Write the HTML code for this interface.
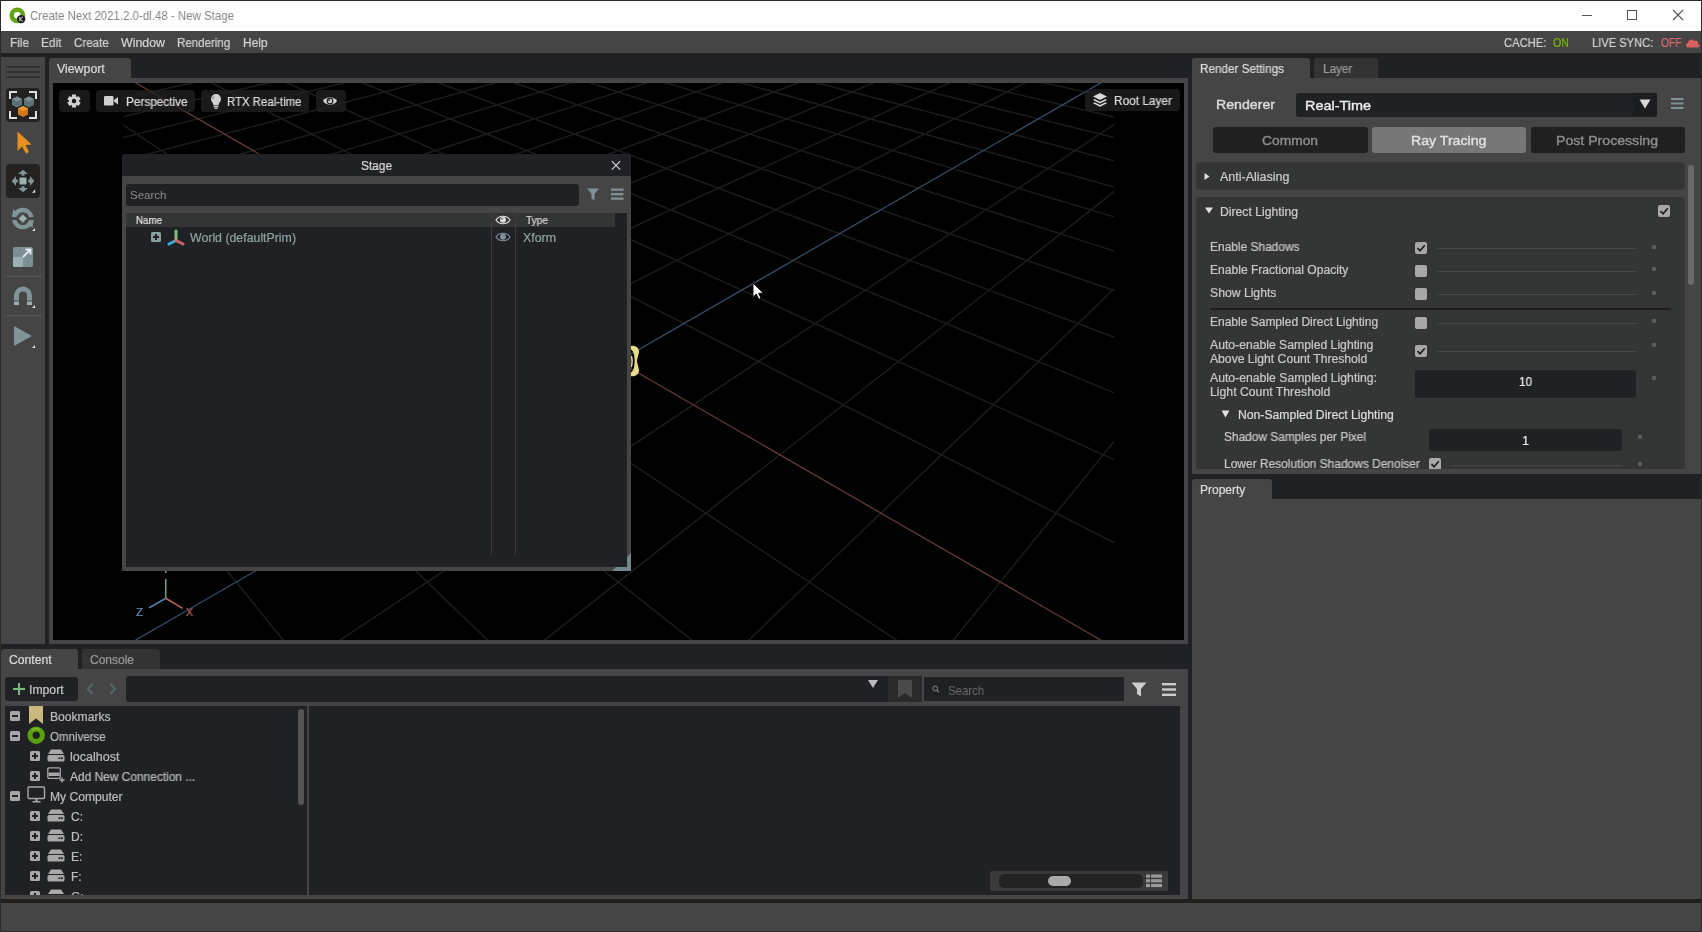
<!DOCTYPE html>
<html><head><meta charset="utf-8">
<style>
*{margin:0;padding:0;box-sizing:border-box}
html,body{width:1702px;height:932px;overflow:hidden;background:#1f2124}
body{position:relative;font-family:"Liberation Sans",sans-serif;font-size:12px;color:#d0d0d0}
.a{position:absolute}
.t{position:absolute;white-space:nowrap;line-height:1;transform-origin:0 0;will-change:transform}
</style></head><body>
<div class="a" style="left:0px;top:0px;width:1702px;height:932px;background:#2b2b2b;"></div>
<div class="a" style="left:1px;top:1px;width:1700px;height:30px;background:#ffffff;"></div>
<div class="a" style="left:1px;top:31px;width:1700px;height:22px;background:#454545;"></div>
<div class="a" style="left:1px;top:53px;width:1700px;height:4px;background:#231f1c;"></div>
<div class="a" style="left:1px;top:57px;width:1700px;height:842px;background:#1f2124;"></div>
<div class="a" style="left:1px;top:899px;width:1700px;height:4px;background:#231f1c;"></div>
<div class="a" style="left:1px;top:903px;width:1700px;height:28px;background:#454545;"></div>
<svg class="a" style="left:9px;top:7px;" width="17" height="17" viewBox="0 0 17 17"><circle cx="8.3" cy="8.3" r="5.6" fill="none" stroke="#5fa812" stroke-width="4.6"/><circle cx="12.2" cy="12.1" r="4.2" fill="#1a1a1a"/><path d="M10.9 9.9 V14.3 M13.9 9.9 L11.2 12.1 L13.9 14.3" stroke="#dddddd" stroke-width="1" fill="none"/></svg>
<div id="t0" class="t" style="left:30.0px;top:10.42px;font-size:12.50px;color:#858585;font-weight:normal;transform:scaleX(0.9174);">Create Next 2021.2.0-dl.48 - New Stage</div>
<div class="a" style="left:1582px;top:15px;width:10px;height:1px;background:#555;"></div>
<div class="a" style="left:1627px;top:10px;width:10px;height:10px;background:transparent;border:1px solid #555"></div>
<svg class="a" style="left:1672px;top:9px;" width="12" height="12" viewBox="0 0 12 12"><path d="M1 1L11 11M11 1L1 11" stroke="#555" stroke-width="1.1"/></svg>
<div id="t1" class="t" style="left:10.4px;top:36.84px;font-size:12.00px;color:#d2d2d2;font-weight:normal;-webkit-text-stroke:0.22px #d2d2d2;transform:scaleX(0.9822);">File</div>
<div id="t2" class="t" style="left:41.3px;top:36.84px;font-size:12.00px;color:#d2d2d2;font-weight:normal;-webkit-text-stroke:0.22px #d2d2d2;transform:scaleX(0.9861);">Edit</div>
<div id="t3" class="t" style="left:74.2px;top:36.84px;font-size:12.00px;color:#d2d2d2;font-weight:normal;-webkit-text-stroke:0.22px #d2d2d2;transform:scaleX(0.9658);">Create</div>
<div id="t4" class="t" style="left:121.0px;top:36.84px;font-size:12.00px;color:#d2d2d2;font-weight:normal;-webkit-text-stroke:0.22px #d2d2d2;transform:scaleX(1.0307);">Window</div>
<div id="t5" class="t" style="left:177.3px;top:36.84px;font-size:12.00px;color:#d2d2d2;font-weight:normal;-webkit-text-stroke:0.22px #d2d2d2;transform:scaleX(0.9607);">Rendering</div>
<div id="t6" class="t" style="left:243.0px;top:36.84px;font-size:12.00px;color:#d2d2d2;font-weight:normal;-webkit-text-stroke:0.22px #d2d2d2;transform:scaleX(0.9924);">Help</div>
<div id="t7" class="t" style="left:1504.2px;top:36.84px;font-size:12.00px;color:#d2d2d2;font-weight:normal;-webkit-text-stroke:0.22px #d2d2d2;transform:scaleX(0.9351);">CACHE:</div>
<div id="t8" class="t" style="left:1553.3px;top:36.84px;font-size:12.00px;color:#76b900;font-weight:normal;-webkit-text-stroke:0.22px #76b900;transform:scaleX(0.8833);">ON</div>
<div id="t9" class="t" style="left:1592.3px;top:36.84px;font-size:12.00px;color:#d2d2d2;font-weight:normal;-webkit-text-stroke:0.22px #d2d2d2;transform:scaleX(0.9299);">LIVE SYNC:</div>
<div id="t10" class="t" style="left:1660.5px;top:36.84px;font-size:12.00px;color:#e06a6a;font-weight:normal;-webkit-text-stroke:0.22px #e06a6a;transform:scaleX(0.8583);">OFF</div>
<svg class="a" style="left:1685px;top:37px;" width="15" height="11" viewBox="0 0 15 11"><path d="M3.5 10.5 C0.5 10.5 0 6.5 3 6 C3 2.5 7.5 1 9 4 C11 2.5 14 4.5 13 7 C15.5 8 15 10.5 12.5 10.5Z" fill="#d86060"/></svg>
<div class="a" style="left:1px;top:57px;width:44px;height:587px;background:#454545;"></div>
<div class="a" style="left:6px;top:66px;width:34px;height:2px;background:#333333;"></div>
<div class="a" style="left:6px;top:71px;width:34px;height:2px;background:#333333;"></div>
<div class="a" style="left:6px;top:76px;width:34px;height:2px;background:#333333;"></div>
<div class="a" style="left:6px;top:88px;width:34px;height:34px;background:#232221;border-radius:4px;"></div>
<svg class="a" style="left:6px;top:88px;" width="34" height="34" viewBox="0 0 34 34">
<path d="M4 11V4H11 M23 4H30V11 M4 23V30H11 M30 23V30H23" fill="none" stroke="#dedede" stroke-width="2"/>
<path d="M6 11 L11 8.5 L16 11 L16 17 L11 19.5 L6 17Z" fill="#5d7075"/><path d="M6 11 L11 13.5 L16 11 L11 8.5Z" fill="#7a8d92"/>
<path d="M18 11 L23 8.5 L28 11 L28 17 L23 19.5 L18 17Z" fill="#5d7075"/><path d="M18 11 L23 13.5 L28 11 L23 8.5Z" fill="#7a8d92"/>
<path d="M12 20.5 L17 18 L22 20.5 L22 26.5 L17 29 L12 26.5Z" fill="#d27a18"/><path d="M12 20.5 L17 23 L22 20.5 L17 18Z" fill="#f09a30"/>
</svg>
<svg class="a" style="left:15px;top:130px;" width="18" height="25" viewBox="0 0 18 25"><path d="M2.5 1.5 L2.5 21 L7 16.5 L11 23.5 L14 22 L10.5 15 L16.5 14.5Z" fill="#e8901e"/></svg>
<div class="a" style="left:6px;top:164px;width:34px;height:34px;background:#232221;border-radius:4px;"></div>
<svg class="a" style="left:6px;top:164px;" width="34" height="34" viewBox="0 0 34 34">
<path d="M17 5.7 L22 10 H18.5 V11.8 H15.5 V10 H12Z M17 28.3 L22 24 H18.5 V22.2 H15.5 V24 H12Z M5.7 17 L10 12 V15.5 H11.8 V18.5 H10 V22Z M28.3 17 L24 12 V15.5 H22.2 V18.5 H24 V22Z" fill="#7f9598"/>
<rect x="13.5" y="13.4" width="7" height="7.2" rx="1.2" fill="#9cb0b3"/>
<path d="M26 28.8 L29.2 25.6 L29.2 28.8Z" fill="#e8e8e8"/></svg>
<svg class="a" style="left:6px;top:204px;" width="34" height="34" viewBox="0 0 34 34">
<circle cx="16.8" cy="14.6" r="8.6" fill="none" stroke="#7f9598" stroke-width="4.3"/>
<rect x="3" y="13.1" width="28" height="3" fill="#454545"/>
<path d="M6.1 13.1 L7.1 5.2 L13.2 10.2Z" fill="#7f9598"/>
<path d="M27.5 16.1 L26.5 24 L20.4 19Z" fill="#7f9598"/>
<path d="M16.8 10.4 L21 14.6 L16.8 18.8 L12.6 14.6Z" fill="#9cb0b3"/>
<path d="M26 27 L29 24 L29 27Z" fill="#e0e0e0"/></svg>
<svg class="a" style="left:6px;top:244px;" width="34" height="28" viewBox="0 0 34 28">
<rect x="7" y="3" width="20" height="20" rx="2" fill="#7c8f93"/>
<rect x="7" y="13" width="10" height="10" rx="1.5" fill="#9cb0b3"/>
<path d="M17 13 L24.5 5.5 M19.5 5.5 H24.5 V10.5" fill="none" stroke="#e6eeee" stroke-width="1.8"/></svg>
<div class="a" style="left:4px;top:276px;width:38px;height:1px;background:#555555;"></div>
<svg class="a" style="left:6px;top:283px;" width="34" height="28" viewBox="0 0 34 28">
<path d="M8 17.5 V12.5 A9 9 0 0 1 26 12.5 V17.5 H21 V12.5 A4 4 0 0 0 13 12.5 V17.5Z" fill="#7f9598"/>
<rect x="8" y="18.5" width="5" height="3.5" fill="#9cb0b3"/><rect x="21" y="18.5" width="5" height="3.5" fill="#9cb0b3"/>
<path d="M26 25 L29 22 L29 25Z" fill="#e0e0e0"/></svg>
<div class="a" style="left:4px;top:315px;width:38px;height:1px;background:#555555;"></div>
<svg class="a" style="left:6px;top:322px;" width="34" height="28" viewBox="0 0 34 28">
<path d="M8 4 L26 14 L8 24Z" fill="#7f9598"/>
<path d="M26 26 L29 23 L29 26Z" fill="#e0e0e0"/></svg>
<div class="a" style="left:45px;top:57px;width:4px;height:842px;background:#1f2124;"></div>
<div class="a" style="left:49px;top:58px;width:82px;height:20px;background:#454545;border-radius:3px 3px 0 0;"></div>
<div id="t11" class="t" style="left:57.1px;top:63.14px;font-size:12.00px;color:#d8d8d8;font-weight:normal;-webkit-text-stroke:0.22px #d8d8d8;transform:scaleX(1.0283);">Viewport</div>
<div class="a" style="left:49px;top:78px;width:1139px;height:566px;background:#454545;"></div>
<div class="a" style="left:53px;top:83px;width:1131px;height:557px;background:#000000;"></div>
<svg width="991" height="557" style="position:absolute;left:123px;top:83px" shape-rendering="auto"><g stroke="#1c1c1c" stroke-width="1.5"><line x1="495.2" y1="-125.9" x2="1500.2" y2="67.5"/><line x1="495.2" y1="-125.9" x2="-509.7" y2="67.5"/><line x1="471.4" y1="-121.3" x2="1498.1" y2="85.5"/><line x1="519.1" y1="-121.3" x2="-507.6" y2="85.5"/><line x1="446.4" y1="-116.5" x2="1495.8" y2="105.2"/><line x1="544.1" y1="-116.5" x2="-505.3" y2="105.2"/><line x1="420.2" y1="-111.4" x2="1493.3" y2="126.9"/><line x1="570.3" y1="-111.4" x2="-502.8" y2="126.9"/><line x1="392.8" y1="-106.1" x2="1490.5" y2="150.8"/><line x1="597.7" y1="-106.1" x2="-500.0" y2="150.8"/><line x1="363.9" y1="-100.6" x2="1487.5" y2="177.4"/><line x1="626.6" y1="-100.6" x2="-497.0" y2="177.4"/><line x1="333.6" y1="-94.8" x2="1484.0" y2="207.1"/><line x1="656.9" y1="-94.8" x2="-493.5" y2="207.1"/><line x1="301.7" y1="-88.6" x2="1480.2" y2="240.6"/><line x1="688.8" y1="-88.6" x2="-489.7" y2="240.6"/><line x1="268.1" y1="-82.2" x2="1475.8" y2="278.5"/><line x1="722.4" y1="-82.2" x2="-485.3" y2="278.5"/><line x1="232.6" y1="-75.3" x2="1470.8" y2="321.8"/><line x1="757.9" y1="-75.3" x2="-480.3" y2="321.8"/><line x1="195.1" y1="-68.1" x2="1465.0" y2="371.8"/><line x1="795.4" y1="-68.1" x2="-474.5" y2="371.8"/><line x1="155.4" y1="-60.5" x2="1458.3" y2="430.1"/><line x1="835.1" y1="-60.5" x2="-467.8" y2="430.1"/><line x1="113.2" y1="-52.3" x2="1450.3" y2="499.1"/><line x1="877.3" y1="-52.3" x2="-459.8" y2="499.1"/><line x1="68.5" y1="-43.7" x2="1440.8" y2="581.8"/><line x1="922.0" y1="-43.7" x2="-450.3" y2="581.8"/><line x1="20.8" y1="-34.6" x2="1429.1" y2="682.9"/><line x1="969.7" y1="-34.6" x2="-438.6" y2="682.9"/><line x1="-84.4" y1="-14.3" x2="1395.8" y2="971.7"/><line x1="1074.9" y1="-14.3" x2="-405.3" y2="971.7"/><line x1="-142.6" y1="-3.1" x2="1370.7" y2="1188.3"/><line x1="1133.1" y1="-3.1" x2="-380.2" y2="1188.3"/><line x1="-205.1" y1="8.9" x2="1335.7" y2="1491.6"/><line x1="1195.6" y1="8.9" x2="-345.2" y2="1491.6"/><line x1="-272.5" y1="21.9" x2="1283.2" y2="1946.5"/><line x1="1263.0" y1="21.9" x2="-292.7" y2="1946.5"/><line x1="-345.2" y1="35.9" x2="1195.6" y2="2704.7"/><line x1="1335.7" y1="35.9" x2="-205.1" y2="2704.7"/><line x1="-424.0" y1="51.0" x2="1020.5" y2="4221.1"/><line x1="1414.5" y1="51.0" x2="-30.0" y2="4221.1"/><line x1="-509.7" y1="67.5" x2="495.2" y2="8770.3"/><line x1="1500.2" y1="67.5" x2="495.2" y2="8770.3"/></g><g stroke-width="1.2"><line x1="-30.0" y1="-24.8" x2="1414.5" y2="809.2" stroke="#6a3b36"/><line x1="1020.5" y1="-24.8" x2="-424.0" y2="809.2" stroke="#37516b"/></g></svg>
<svg class="a" style="left:626px;top:344px;" width="16" height="34" viewBox="0 0 16 34"><path d="M5 1.8 C9 1.5 12.5 3 13 7 C13.3 10 11.2 13 11 17 C11.2 21 13.3 24 13 27 C12.5 31 9 32.5 5 32.2 L5 28.5 C7 27.5 8.6 24 8.6 17 C8.6 10 7 6.5 5 5.5Z" fill="#e8dc84"/><path d="M5 12 C6.3 13.5 6.6 20.5 5 23" fill="none" stroke="#e8dc84" stroke-width="1.5"/></svg>
<div class="a" style="left:59px;top:90px;width:31px;height:22px;background:rgba(34,34,34,0.72);border-radius:4px;"></div>
<svg class="a" style="left:66px;top:93px;" width="16" height="16" viewBox="0 0 16 16"><path fill="#d0d0d0" fill-rule="evenodd" d="M5.50 3.67 L5.96 3.43 L5.99 1.50 L10.01 1.50 L10.04 3.43 L10.50 3.67 L10.93 3.95 L12.62 3.01 L14.63 6.49 L12.97 7.48 L13.00 8.00 L12.97 8.52 L14.63 9.51 L12.62 12.99 L10.93 12.05 L10.50 12.33 L10.04 12.57 L10.01 14.50 L5.99 14.50 L5.96 12.57 L5.50 12.33 L5.07 12.05 L3.38 12.99 L1.37 9.51 L3.03 8.52 L3.00 8.00 L3.03 7.48 L1.37 6.49 L3.38 3.01 L5.07 3.95Z M8 5.8 A2.2 2.2 0 1 0 8 10.2 A2.2 2.2 0 1 0 8 5.8Z"/></svg>
<div class="a" style="left:96px;top:90px;width:99px;height:22px;background:rgba(34,34,34,0.72);border-radius:4px;"></div>
<svg class="a" style="left:103px;top:95px;" width="17" height="12" viewBox="0 0 17 12"><rect x="1" y="1" width="9.5" height="9.5" rx="1.3" fill="#d0d0d0"/><path d="M11 5 L15 2 V9.5 L11 6.5Z" fill="#d0d0d0"/></svg>
<div id="t12" class="t" style="left:125.5px;top:95.84px;font-size:12.00px;color:#dcdcdc;font-weight:normal;-webkit-text-stroke:0.22px #dcdcdc;transform:scaleX(0.9824);">Perspective</div>
<div class="a" style="left:201px;top:90px;width:108px;height:22px;background:rgba(34,34,34,0.72);border-radius:4px;"></div>
<svg class="a" style="left:209px;top:93px;" width="14" height="17" viewBox="0 0 14 17"><path d="M7 1 A5 5 0 0 1 12 6 C12 8.5 10 9.5 9.6 12 H4.4 C4 9.5 2 8.5 2 6 A5 5 0 0 1 7 1Z" fill="#d0d0d0"/><path d="M5 3.5 A3 3 0 0 0 3.8 6" stroke="#555" stroke-width="1" fill="none"/><rect x="4.5" y="12.6" width="5" height="1.4" fill="#d0d0d0"/><rect x="5" y="14.4" width="4" height="1.4" rx="0.6" fill="#d0d0d0"/></svg>
<div id="t13" class="t" style="left:226.5px;top:95.84px;font-size:12.00px;color:#dcdcdc;font-weight:normal;-webkit-text-stroke:0.22px #dcdcdc;transform:scaleX(0.9494);">RTX Real-time</div>
<div class="a" style="left:316px;top:90px;width:30px;height:22px;background:rgba(34,34,34,0.72);border-radius:4px;"></div>
<svg class="a" style="left:322px;top:95px;" width="16" height="12" viewBox="0 0 16 12"><path d="M1 6 C4 1 12 1 15 6 C12 11 4 11 1 6Z" fill="#d0d0d0"/><circle cx="8" cy="6" r="3.4" fill="#222"/><circle cx="8" cy="6" r="2.2" fill="#d0d0d0"/><circle cx="7" cy="5" r="0.9" fill="#222"/></svg>
<div class="a" style="left:1085px;top:89px;width:95px;height:22px;background:rgba(34,34,34,0.72);border-radius:4px;"></div>
<svg class="a" style="left:1092px;top:92px;" width="16" height="16" viewBox="0 0 16 16"><path d="M8 1 L15 4.5 L8 8 L1 4.5Z" fill="#dadada"/><path d="M2.5 7 L8 9.8 L13.5 7 L15 7.9 L8 11.4 L1 7.9Z" fill="#dadada"/><path d="M2.5 10.3 L8 13.1 L13.5 10.3 L15 11.2 L8 14.7 L1 11.2Z" fill="#dadada"/></svg>
<div id="t14" class="t" style="left:1114.0px;top:94.84px;font-size:12.00px;color:#dcdcdc;font-weight:normal;-webkit-text-stroke:0.22px #dcdcdc;transform:scaleX(0.9880);">Root Layer</div>
<svg class="a" style="left:130px;top:560px;" width="70" height="62" viewBox="0 0 70 62"><path d="M35.8 19 V38.2" stroke="#6fa860" stroke-width="1.5"/><path d="M35.8 11 V13" stroke="#6fa860" stroke-width="1.5"/>
<path d="M35.8 38.2 L19 47.9" stroke="#4f86b8" stroke-width="1.6"/><path d="M35.8 38.2 L52.6 48.4" stroke="#c26458" stroke-width="1.6"/></svg>
<div id="t15" class="t" style="left:135.8px;top:606.97px;font-size:11.50px;color:#5b8fc2;font-weight:normal;-webkit-text-stroke:0.22px #5b8fc2;transform:scaleX(1.0098);">Z</div>
<div id="t16" class="t" style="left:186.0px;top:606.97px;font-size:11.50px;color:#c5645a;font-weight:normal;-webkit-text-stroke:0.22px #c5645a;transform:scaleX(0.9124);">X</div>
<svg class="a" style="left:751px;top:281px;" width="14" height="20" viewBox="0 0 14 20"><path d="M2 2 V16.2 L5.3 13 L7.8 18.2 L10 17.3 L7.6 12.2 H12.4Z" fill="#fff" stroke="#000" stroke-width="0.9"/></svg>
<div class="a" style="left:122px;top:154px;width:509px;height:417px;background:#454545;border-radius:3px 3px 0 0;"></div>
<div class="a" style="left:122px;top:154px;width:509px;height:22px;background:#1f2124;border-radius:3px 3px 0 0;"></div>
<div id="t17" class="t" style="left:360.7px;top:160.04px;font-size:12.00px;color:#dcdcdc;font-weight:normal;-webkit-text-stroke:0.22px #dcdcdc;transform:scaleX(0.9885);">Stage</div>
<svg class="a" style="left:610px;top:160px;" width="12" height="11" viewBox="0 0 12 11"><path d="M1.8 1.2 L10.2 9.6 M10.2 1.2 L1.8 9.6" stroke="#e0e0e0" stroke-width="1.05"/></svg>
<div class="a" style="left:126px;top:184px;width:453px;height:22px;background:#1f2124;border-radius:3px;"></div>
<div id="t18" class="t" style="left:130.3px;top:190.27px;font-size:11.50px;color:#8a8a8a;font-weight:normal;transform:scaleX(0.9880);">Search</div>
<svg class="a" style="left:585px;top:186px;" width="16" height="16" viewBox="0 0 16 16"><path d="M2 2.5 H14 L9.5 8 V14.5 L6.5 12.5 V8Z" fill="#7f9195"/></svg>
<svg class="a" style="left:609px;top:186px;" width="16" height="16" viewBox="0 0 16 16"><rect x="2" y="2.5" width="12.5" height="2.3" fill="#7f9195"/><rect x="2" y="7" width="12.5" height="2.3" fill="#7f9195"/><rect x="2" y="11.5" width="12.5" height="2.3" fill="#7f9195"/></svg>
<div class="a" style="left:126px;top:213px;width:501px;height:354px;background:#1f2124;"></div>
<div class="a" style="left:126px;top:213px;width:489px;height:14px;background:#343535;"></div>
<div id="t19" class="t" style="left:136.2px;top:214.91px;font-size:10.50px;color:#e0e0e0;font-weight:normal;-webkit-text-stroke:0.22px #e0e0e0;transform:scaleX(0.9281);">Name</div>
<div id="t20" class="t" style="left:525.5px;top:215.01px;font-size:10.50px;color:#d8d8d8;font-weight:normal;-webkit-text-stroke:0.22px #d8d8d8;transform:scaleX(0.9664);">Type</div>
<div class="a" style="left:491px;top:213px;width:1px;height:342px;background:#3c3c3c;"></div>
<div class="a" style="left:515px;top:213px;width:1px;height:342px;background:#3c3c3c;"></div>
<svg class="a" style="left:495px;top:214px;" width="16" height="12" viewBox="0 0 16 12"><path d="M1 6 C4 1 12 1 15 6 C12 11 4 11 1 6Z" fill="none" stroke="#e0e0e0" stroke-width="1.2"/><circle cx="8" cy="5.8" r="3" fill="#e0e0e0"/><circle cx="7" cy="4.8" r="1" fill="#777"/></svg>
<svg class="a" style="left:495px;top:231px;" width="16" height="12" viewBox="0 0 16 12"><path d="M1 6 C4 1 12 1 15 6 C12 11 4 11 1 6Z" fill="none" stroke="#7f9195" stroke-width="1.2"/><circle cx="8" cy="5.8" r="3" fill="#7f9195"/></svg>
<div class="a" style="left:151px;top:232px;width:10px;height:10px;background:#8b9ea2;border-radius:1.5px;"></div>
<div class="a" style="left:155px;top:234px;width:2px;height:6px;background:#1f2124;"></div>
<div class="a" style="left:153px;top:236px;width:6px;height:2px;background:#1f2124;"></div>
<svg class="a" style="left:166px;top:229px;" width="20" height="17" viewBox="0 0 20 17"><path d="M10 2 V11" stroke="#7cbf7e" stroke-width="3" stroke-linecap="round"/><path d="M10 11.5 L3 15" stroke="#30b0d4" stroke-width="3" stroke-linecap="round"/><path d="M10 11.5 L17 15" stroke="#d06464" stroke-width="3" stroke-linecap="round"/></svg>
<div id="t21" class="t" style="left:190.3px;top:231.84px;font-size:12.00px;color:#8fa1a3;font-weight:normal;-webkit-text-stroke:0.22px #8fa1a3;transform:scaleX(1.0277);">World (defaultPrim)</div>
<div id="t22" class="t" style="left:523.4px;top:231.84px;font-size:12.00px;color:#8fa1a3;font-weight:normal;-webkit-text-stroke:0.22px #8fa1a3;transform:scaleX(1.0307);">Xform</div>
<svg class="a" style="left:612px;top:553px;" width="19" height="18" viewBox="0 0 19 18"><path d="M19 0 V18 H0 L4 14 H15 V4Z" fill="#73868a"/></svg>
<div class="a" style="left:1188px;top:57px;width:4px;height:842px;background:#1f2124;"></div>
<div class="a" style="left:1192px;top:58px;width:118px;height:20px;background:#454545;border-radius:3px 3px 0 0;"></div>
<div id="t23" class="t" style="left:1200.3px;top:62.84px;font-size:12.00px;color:#dcdcdc;font-weight:normal;-webkit-text-stroke:0.22px #dcdcdc;transform:scaleX(0.9760);">Render Settings</div>
<div class="a" style="left:1314px;top:58px;width:64px;height:20px;background:#333333;border-radius:3px 3px 0 0;"></div>
<div id="t24" class="t" style="left:1322.6px;top:62.84px;font-size:12.00px;color:#9a9a9a;font-weight:normal;-webkit-text-stroke:0.22px #9a9a9a;transform:scaleX(0.9790);">Layer</div>
<div class="a" style="left:1192px;top:78px;width:509px;height:396px;background:#454545;"></div>
<div id="t25" class="t" style="left:1216.4px;top:97.74px;font-size:13.30px;color:#dedede;font-weight:normal;-webkit-text-stroke:0.4px #dedede;transform:scaleX(1.0643);">Renderer</div>
<div class="a" style="left:1296px;top:93px;width:361px;height:24px;background:#1f2124;border-radius:3px;"></div>
<div class="a" style="left:1633px;top:93px;width:24px;height:24px;background:#1b1c1e;border-radius:0 3px 3px 0;"></div>
<div id="t26" class="t" style="left:1304.5px;top:98.77px;font-size:13.50px;color:#eeeeee;font-weight:normal;-webkit-text-stroke:0.4px #eeeeee;transform:scaleX(1.0686);">Real-Time</div>
<svg class="a" style="left:1638px;top:98px;" width="14" height="12" viewBox="0 0 14 12"><path d="M1.5 1.5 H12.5 L7 10.5Z" fill="#d8d8d8"/></svg>
<svg class="a" style="left:1670px;top:97px;" width="14" height="13" viewBox="0 0 14 13"><rect x="1" y="1" width="12.5" height="2" fill="#7f9195"/><rect x="1" y="5.5" width="12.5" height="2" fill="#7f9195"/><rect x="1" y="10" width="12.5" height="2" fill="#7f9195"/></svg>
<div class="a" style="left:1213px;top:127px;width:155px;height:26px;background:#202020;border-radius:3px;"></div>
<div id="t27" class="t" style="left:1261.5px;top:133.60px;font-size:13.00px;color:#8c8c8c;font-weight:normal;-webkit-text-stroke:0.4px #8c8c8c;transform:scaleX(1.0616);">Common</div>
<div class="a" style="left:1372px;top:127px;width:154px;height:26px;background:#777777;border-radius:3px;"></div>
<div id="t28" class="t" style="left:1411.3px;top:133.60px;font-size:13.00px;color:#e0e0e0;font-weight:normal;-webkit-text-stroke:0.4px #e0e0e0;transform:scaleX(1.0868);">Ray Tracing</div>
<div class="a" style="left:1530.5px;top:127px;width:154.5px;height:26px;background:#202020;border-radius:3px;"></div>
<div id="t29" class="t" style="left:1556.4px;top:133.60px;font-size:13.00px;color:#8c8c8c;font-weight:normal;-webkit-text-stroke:0.4px #8c8c8c;transform:scaleX(1.0858);">Post Processing</div>
<div class="a" style="left:1196px;top:162px;width:489px;height:28px;background:#343535;border-radius:3px;"></div>
<svg class="a" style="left:1203px;top:172px;" width="8" height="9" viewBox="0 0 8 9"><path d="M1.5 1 L6.5 4.5 L1.5 8Z" fill="#e0e0e0"/></svg>
<div id="t30" class="t" style="left:1220.0px;top:171.14px;font-size:12.00px;color:#cccccc;font-weight:normal;-webkit-text-stroke:0.22px #cccccc;transform:scaleX(1.0419);">Anti-Aliasing</div>
<div class="a" style="left:1196px;top:197px;width:489px;height:272px;background:#343535;border-radius:3px 3px 0 0;"></div>
<svg class="a" style="left:1204px;top:206px;" width="10" height="9" viewBox="0 0 10 9"><path d="M1 1.5 H9 L5 7.5Z" fill="#e0e0e0"/></svg>
<div id="t31" class="t" style="left:1220.0px;top:206.14px;font-size:12.00px;color:#cccccc;font-weight:normal;-webkit-text-stroke:0.22px #cccccc;transform:scaleX(1.0167);">Direct Lighting</div>
<div class="a" style="left:1658px;top:205px;width:12px;height:12px;background:#a8a8a8;border-radius:2px;"></div><svg class="a" style="left:1658px;top:205px;" width="12" height="12" viewBox="0 0 12 12"><path d="M2.5 6.2 L5 8.8 L9.8 3.2" fill="none" stroke="#1e1e1e" stroke-width="1.7"/></svg>
<div id="t32" class="t" style="left:1210.3px;top:240.74px;font-size:12.00px;color:#c8c8c8;font-weight:normal;-webkit-text-stroke:0.22px #c8c8c8;transform:scaleX(0.9936);">Enable Shadows</div>
<div class="a" style="left:1415px;top:242px;width:12px;height:12px;background:#a8a8a8;border-radius:2px;"></div><svg class="a" style="left:1415px;top:242px;" width="12" height="12" viewBox="0 0 12 12"><path d="M2.5 6.2 L5 8.8 L9.8 3.2" fill="none" stroke="#1e1e1e" stroke-width="1.7"/></svg>
<div class="a" style="left:1437px;top:248px;width:199px;height:1px;background:#474848;"></div>
<div class="a" style="left:1652px;top:244.6px;width:4px;height:4px;background:#5c5d5d;border-radius:1px;"></div>
<div id="t33" class="t" style="left:1210.3px;top:263.84px;font-size:12.00px;color:#c8c8c8;font-weight:normal;-webkit-text-stroke:0.22px #c8c8c8;transform:scaleX(1.0065);">Enable Fractional Opacity</div>
<div class="a" style="left:1415px;top:265px;width:12px;height:12px;background:#a8a8a8;border-radius:2px;"></div>
<div class="a" style="left:1437px;top:271px;width:199px;height:1px;background:#474848;"></div>
<div class="a" style="left:1652px;top:267.4px;width:4px;height:4px;background:#5c5d5d;border-radius:1px;"></div>
<div id="t34" class="t" style="left:1210.3px;top:286.84px;font-size:12.00px;color:#c8c8c8;font-weight:normal;-webkit-text-stroke:0.22px #c8c8c8;transform:scaleX(1.0157);">Show Lights</div>
<div class="a" style="left:1415px;top:288px;width:12px;height:12px;background:#a8a8a8;border-radius:2px;"></div>
<div class="a" style="left:1437px;top:294px;width:199px;height:1px;background:#474848;"></div>
<div class="a" style="left:1652px;top:290.5px;width:4px;height:4px;background:#5c5d5d;border-radius:1px;"></div>
<div id="t35" class="t" style="left:1210.3px;top:315.84px;font-size:12.00px;color:#c8c8c8;font-weight:normal;-webkit-text-stroke:0.22px #c8c8c8;">Enable Sampled Direct Lighting</div>
<div class="a" style="left:1415px;top:317px;width:12px;height:12px;background:#a8a8a8;border-radius:2px;"></div>
<div class="a" style="left:1437px;top:323px;width:199px;height:1px;background:#474848;"></div>
<div class="a" style="left:1652px;top:319.4px;width:4px;height:4px;background:#5c5d5d;border-radius:1px;"></div>
<div class="a" style="left:1210px;top:308px;width:461px;height:2px;background:#1e1e1e;"></div>
<div id="t36" class="t" style="left:1210.3px;top:339.24px;font-size:12.00px;color:#c8c8c8;font-weight:normal;-webkit-text-stroke:0.22px #c8c8c8;transform:scaleX(1.0157);">Auto-enable Sampled Lighting</div>
<div id="t37" class="t" style="left:1210.3px;top:353.14px;font-size:12.00px;color:#c8c8c8;font-weight:normal;-webkit-text-stroke:0.22px #c8c8c8;transform:scaleX(1.0134);">Above Light Count Threshold</div>
<div class="a" style="left:1415px;top:345px;width:12px;height:12px;background:#a8a8a8;border-radius:2px;"></div><svg class="a" style="left:1415px;top:345px;" width="12" height="12" viewBox="0 0 12 12"><path d="M2.5 6.2 L5 8.8 L9.8 3.2" fill="none" stroke="#1e1e1e" stroke-width="1.7"/></svg>
<div class="a" style="left:1437px;top:351px;width:199px;height:1px;background:#474848;"></div>
<div class="a" style="left:1652px;top:342.5px;width:4px;height:4px;background:#5c5d5d;border-radius:1px;"></div>
<div id="t38" class="t" style="left:1210.3px;top:371.84px;font-size:12.00px;color:#c8c8c8;font-weight:normal;-webkit-text-stroke:0.22px #c8c8c8;transform:scaleX(1.0175);">Auto-enable Sampled Lighting:</div>
<div id="t39" class="t" style="left:1210.3px;top:386.24px;font-size:12.00px;color:#c8c8c8;font-weight:normal;-webkit-text-stroke:0.22px #c8c8c8;transform:scaleX(1.0207);">Light Count Threshold</div>
<div class="a" style="left:1415px;top:370px;width:221px;height:28px;background:#1f2124;border-radius:2px;"></div>
<div id="t40" class="t" style="left:1518.5px;top:376.24px;font-size:12.00px;color:#e8e8e8;font-weight:normal;-webkit-text-stroke:0.22px #e8e8e8;transform:scaleX(0.9731);">10</div>
<div class="a" style="left:1652px;top:375.5px;width:4px;height:4px;background:#5c5d5d;border-radius:1px;"></div>
<svg class="a" style="left:1220px;top:409px;" width="11" height="10" viewBox="0 0 11 10"><path d="M1.5 1.5 H9.5 L5.5 8.5Z" fill="#e0e0e0"/></svg>
<div id="t41" class="t" style="left:1238.0px;top:409.34px;font-size:12.00px;color:#dcdcdc;font-weight:normal;-webkit-text-stroke:0.22px #dcdcdc;transform:scaleX(1.0148);">Non-Sampled Direct Lighting</div>
<div id="t42" class="t" style="left:1224.3px;top:431.04px;font-size:12.00px;color:#c8c8c8;font-weight:normal;-webkit-text-stroke:0.22px #c8c8c8;transform:scaleX(0.9901);">Shadow Samples per Pixel</div>
<div class="a" style="left:1429px;top:429px;width:193px;height:22px;background:#1f2124;border-radius:2px;"></div>
<div id="t43" class="t" style="left:1521.5px;top:434.94px;font-size:12.00px;color:#e8e8e8;font-weight:normal;-webkit-text-stroke:0.22px #e8e8e8;transform:scaleX(1.0467);">1</div>
<div class="a" style="left:1638px;top:434.5px;width:4px;height:4px;background:#5c5d5d;border-radius:1px;"></div>
<div id="t44" class="t" style="left:1224.3px;top:457.64px;font-size:12.00px;color:#c8c8c8;font-weight:normal;-webkit-text-stroke:0.22px #c8c8c8;transform:scaleX(0.9960);">Lower Resolution Shadows Denoiser</div>
<div class="a" style="left:1429px;top:458px;width:12px;height:11px;overflow:hidden"><div class="a" style="left:0px;top:0px;width:12px;height:12px;background:#a8a8a8;border-radius:2px;"></div><svg class="a" style="left:0px;top:0px;" width="12" height="12" viewBox="0 0 12 12"><path d="M2.5 6.2 L5 8.8 L9.8 3.2" fill="none" stroke="#1e1e1e" stroke-width="1.7"/></svg></div>
<div class="a" style="left:1451px;top:465px;width:171px;height:1px;background:#474848;"></div>
<div class="a" style="left:1638px;top:461.5px;width:4px;height:4px;background:#5c5d5d;border-radius:1px;"></div>
<div class="a" style="left:1688px;top:165px;width:6px;height:120px;background:#6a6a6a;border-radius:3px;"></div>
<div class="a" style="left:1192px;top:479px;width:80px;height:20px;background:#454545;border-radius:3px 3px 0 0;"></div>
<div id="t45" class="t" style="left:1200.3px;top:484.14px;font-size:12.00px;color:#dcdcdc;font-weight:normal;-webkit-text-stroke:0.22px #dcdcdc;">Property</div>
<div class="a" style="left:1192px;top:499px;width:509px;height:400px;background:#454545;"></div>
<div class="a" style="left:1196px;top:469px;width:489px;height:5px;background:#454545;"></div>
<div class="a" style="left:1px;top:649px;width:77px;height:20px;background:#454545;border-radius:3px 3px 0 0;"></div>
<div id="t46" class="t" style="left:9.4px;top:653.84px;font-size:12.00px;color:#dcdcdc;font-weight:normal;-webkit-text-stroke:0.22px #dcdcdc;transform:scaleX(1.0135);">Content</div>
<div class="a" style="left:82px;top:649px;width:78px;height:20px;background:#333333;border-radius:3px 3px 0 0;"></div>
<div id="t47" class="t" style="left:90.2px;top:653.84px;font-size:12.00px;color:#9a9a9a;font-weight:normal;-webkit-text-stroke:0.22px #9a9a9a;">Console</div>
<div class="a" style="left:1px;top:669px;width:1187px;height:230px;background:#454545;"></div>
<div class="a" style="left:5px;top:677px;width:73px;height:24px;background:#1f2124;border-radius:3px;"></div>
<svg class="a" style="left:11px;top:681px;" width="16" height="16" viewBox="0 0 16 16"><rect x="7" y="2" width="2" height="12" fill="#76bb76"/><rect x="2" y="7" width="12" height="2" fill="#76bb76"/></svg>
<div id="t48" class="t" style="left:29.4px;top:683.84px;font-size:12.00px;color:#c4c4c4;font-weight:normal;-webkit-text-stroke:0.22px #c4c4c4;transform:scaleX(1.0172);">Import</div>
<svg class="a" style="left:84px;top:682px;" width="12" height="14" viewBox="0 0 12 14"><path d="M8.5 2 L4 7 L8.5 12" fill="none" stroke="#55686c" stroke-width="2"/></svg>
<svg class="a" style="left:107px;top:682px;" width="12" height="14" viewBox="0 0 12 14"><path d="M3.5 2 L8 7 L3.5 12" fill="none" stroke="#55686c" stroke-width="2"/></svg>
<div class="a" style="left:126px;top:676px;width:762px;height:26px;background:#1f2124;border-radius:3px 0 0 3px;"></div>
<svg class="a" style="left:866px;top:678px;" width="14" height="12" viewBox="0 0 14 12"><path d="M2 2 H12 L7 10Z" fill="#bbbbbb"/></svg>
<div class="a" style="left:888px;top:676px;width:34px;height:26px;background:#2a2a2a;"></div>
<svg class="a" style="left:896px;top:679px;" width="18" height="21" viewBox="0 0 18 21"><path d="M2 1 H16 V19 L9 14 L2 19Z" fill="#4a4a4a"/></svg>
<div class="a" style="left:924px;top:677px;width:200px;height:24px;background:#1f2124;"></div>
<svg class="a" style="left:930px;top:683px;" width="12" height="12" viewBox="0 0 12 12"><circle cx="5.2" cy="5.5" r="2.4" fill="none" stroke="#888" stroke-width="1"/><path d="M7 7.3 L9 9.3" stroke="#888" stroke-width="1.2"/></svg>
<div id="t49" class="t" style="left:948.0px;top:684.84px;font-size:12.00px;color:#6a6a6a;font-weight:normal;transform:scaleX(0.9545);">Search</div>
<svg class="a" style="left:1130px;top:681px;" width="18" height="17" viewBox="0 0 18 17"><path d="M1.5 1.5 H16.5 L11 8 V15.5 L7 13 V8Z" fill="#cccccc"/></svg>
<svg class="a" style="left:1161px;top:681px;" width="16" height="17" viewBox="0 0 16 17"><rect x="1" y="2" width="14" height="2.4" fill="#cccccc"/><rect x="1" y="7.3" width="14" height="2.4" fill="#cccccc"/><rect x="1" y="12.6" width="14" height="2.4" fill="#cccccc"/></svg>
<div class="a" style="left:5px;top:706px;width:302px;height:189px;background:#1f2124;"></div>
<div class="a" style="left:309px;top:706px;width:871px;height:189px;background:#1f2124;"></div>
<div class="a" style="left:298px;top:709px;width:6px;height:96px;background:#555555;border-radius:3px;"></div>
<div class="a" style="left:10px;top:711px;width:10px;height:10px;background:#a8a8a8;border-radius:1.5px;"></div><div class="a" style="left:12px;top:715px;width:6px;height:2px;background:#1f2124;"></div>
<svg class="a" style="left:29px;top:706px;" width="14" height="18" viewBox="0 0 14 18"><path d="M0 0 H14 V18 L7 12.5 L0 18Z" fill="#c9b97c"/></svg>
<div id="t50" class="t" style="left:50.4px;top:710.84px;font-size:12.00px;color:#bcbcbc;font-weight:normal;-webkit-text-stroke:0.22px #bcbcbc;transform:scaleX(1.0095);">Bookmarks</div>
<div class="a" style="left:10px;top:731px;width:10px;height:10px;background:#a8a8a8;border-radius:1.5px;"></div><div class="a" style="left:12px;top:735px;width:6px;height:2px;background:#1f2124;"></div>
<svg class="a" style="left:27px;top:726px;" width="19" height="19" viewBox="0 0 19 19"><circle cx="9.2" cy="9.2" r="6.1" fill="none" stroke="#5aa00e" stroke-width="5.2"/><path d="M5 4.2 A6.5 6.5 0 0 1 12.5 3.6" stroke="#80c030" stroke-width="1.6" fill="none"/><circle cx="9.2" cy="9.2" r="3.4" fill="#1f2124"/></svg>
<div id="t51" class="t" style="left:50.4px;top:730.84px;font-size:12.00px;color:#bcbcbc;font-weight:normal;-webkit-text-stroke:0.22px #bcbcbc;transform:scaleX(0.9601);">Omniverse</div>
<div class="a" style="left:30px;top:751px;width:10px;height:10px;background:#a8a8a8;border-radius:1.5px;"></div><div class="a" style="left:32px;top:755px;width:6px;height:2px;background:#1f2124;"></div><div class="a" style="left:34px;top:753px;width:2px;height:6px;background:#1f2124;"></div>
<svg class="a" style="left:47px;top:749px;" width="18" height="13" viewBox="0 0 18 13"><path d="M4 0.5 H14 L17 5 H1Z" fill="#a8a8a8"/><rect x="0.5" y="6" width="17" height="6.5" rx="1.5" fill="#a8a8a8"/><rect x="11.5" y="8.3" width="1.8" height="1.8" fill="#222"/><rect x="14" y="8.3" width="1.8" height="1.8" fill="#222"/></svg>
<div id="t52" class="t" style="left:70.3px;top:750.84px;font-size:12.00px;color:#bcbcbc;font-weight:normal;-webkit-text-stroke:0.22px #bcbcbc;transform:scaleX(1.0470);">localhost</div>
<div class="a" style="left:30px;top:771px;width:10px;height:10px;background:#a8a8a8;border-radius:1.5px;"></div><div class="a" style="left:32px;top:775px;width:6px;height:2px;background:#1f2124;"></div><div class="a" style="left:34px;top:773px;width:2px;height:6px;background:#1f2124;"></div>
<svg class="a" style="left:47px;top:767px;" width="19" height="16" viewBox="0 0 19 16"><rect x="0.8" y="0.8" width="12.5" height="10.5" rx="1.2" fill="none" stroke="#a8a8a8" stroke-width="1.3"/><rect x="1.5" y="5.5" width="11" height="3.5" fill="#a8a8a8"/><path d="M15 10.5 V15.5 M12.5 13 H17.5" stroke="#a8a8a8" stroke-width="1.4"/></svg>
<div id="t53" class="t" style="left:70.3px;top:770.84px;font-size:12.00px;color:#bcbcbc;font-weight:normal;-webkit-text-stroke:0.22px #bcbcbc;transform:scaleX(0.9938);">Add New Connection ...</div>
<div class="a" style="left:10px;top:791px;width:10px;height:10px;background:#a8a8a8;border-radius:1.5px;"></div><div class="a" style="left:12px;top:795px;width:6px;height:2px;background:#1f2124;"></div>
<svg class="a" style="left:27px;top:786px;" width="19" height="17" viewBox="0 0 19 17"><rect x="1" y="1" width="16.5" height="11.5" rx="1" fill="none" stroke="#a8a8a8" stroke-width="1.4"/><rect x="8.5" y="12.5" width="2" height="2.5" fill="#a8a8a8"/><rect x="5.5" y="15" width="8" height="1.5" fill="#a8a8a8"/></svg>
<div id="t54" class="t" style="left:50.4px;top:790.84px;font-size:12.00px;color:#bcbcbc;font-weight:normal;-webkit-text-stroke:0.22px #bcbcbc;transform:scaleX(1.0079);">My Computer</div>
<div class="a" style="left:0;top:0;width:307px;height:895px;overflow:hidden"><div class="a" style="left:30px;top:811px;width:10px;height:10px;background:#a8a8a8;border-radius:1.5px;"></div><div class="a" style="left:32px;top:815px;width:6px;height:2px;background:#1f2124;"></div><div class="a" style="left:34px;top:813px;width:2px;height:6px;background:#1f2124;"></div><svg class="a" style="left:47px;top:809px;" width="18" height="13" viewBox="0 0 18 13"><path d="M4 0.5 H14 L17 5 H1Z" fill="#a8a8a8"/><rect x="0.5" y="6" width="17" height="6.5" rx="1.5" fill="#a8a8a8"/><rect x="11.5" y="8.3" width="1.8" height="1.8" fill="#222"/><rect x="14" y="8.3" width="1.8" height="1.8" fill="#222"/></svg><div id="t55" class="t" style="left:70.7px;top:810.84px;font-size:12.00px;color:#bcbcbc;font-weight:normal;-webkit-text-stroke:0.22px #bcbcbc;">C:</div><div class="a" style="left:30px;top:831px;width:10px;height:10px;background:#a8a8a8;border-radius:1.5px;"></div><div class="a" style="left:32px;top:835px;width:6px;height:2px;background:#1f2124;"></div><div class="a" style="left:34px;top:833px;width:2px;height:6px;background:#1f2124;"></div><svg class="a" style="left:47px;top:829px;" width="18" height="13" viewBox="0 0 18 13"><path d="M4 0.5 H14 L17 5 H1Z" fill="#a8a8a8"/><rect x="0.5" y="6" width="17" height="6.5" rx="1.5" fill="#a8a8a8"/><rect x="11.5" y="8.3" width="1.8" height="1.8" fill="#222"/><rect x="14" y="8.3" width="1.8" height="1.8" fill="#222"/></svg><div id="t56" class="t" style="left:70.7px;top:830.84px;font-size:12.00px;color:#bcbcbc;font-weight:normal;-webkit-text-stroke:0.22px #bcbcbc;">D:</div><div class="a" style="left:30px;top:851px;width:10px;height:10px;background:#a8a8a8;border-radius:1.5px;"></div><div class="a" style="left:32px;top:855px;width:6px;height:2px;background:#1f2124;"></div><div class="a" style="left:34px;top:853px;width:2px;height:6px;background:#1f2124;"></div><svg class="a" style="left:47px;top:849px;" width="18" height="13" viewBox="0 0 18 13"><path d="M4 0.5 H14 L17 5 H1Z" fill="#a8a8a8"/><rect x="0.5" y="6" width="17" height="6.5" rx="1.5" fill="#a8a8a8"/><rect x="11.5" y="8.3" width="1.8" height="1.8" fill="#222"/><rect x="14" y="8.3" width="1.8" height="1.8" fill="#222"/></svg><div id="t57" class="t" style="left:70.7px;top:850.84px;font-size:12.00px;color:#bcbcbc;font-weight:normal;-webkit-text-stroke:0.22px #bcbcbc;">E:</div><div class="a" style="left:30px;top:871px;width:10px;height:10px;background:#a8a8a8;border-radius:1.5px;"></div><div class="a" style="left:32px;top:875px;width:6px;height:2px;background:#1f2124;"></div><div class="a" style="left:34px;top:873px;width:2px;height:6px;background:#1f2124;"></div><svg class="a" style="left:47px;top:869px;" width="18" height="13" viewBox="0 0 18 13"><path d="M4 0.5 H14 L17 5 H1Z" fill="#a8a8a8"/><rect x="0.5" y="6" width="17" height="6.5" rx="1.5" fill="#a8a8a8"/><rect x="11.5" y="8.3" width="1.8" height="1.8" fill="#222"/><rect x="14" y="8.3" width="1.8" height="1.8" fill="#222"/></svg><div id="t58" class="t" style="left:70.7px;top:870.84px;font-size:12.00px;color:#bcbcbc;font-weight:normal;-webkit-text-stroke:0.22px #bcbcbc;">F:</div><div class="a" style="left:30px;top:891px;width:10px;height:10px;background:#a8a8a8;border-radius:1.5px;"></div><div class="a" style="left:32px;top:895px;width:6px;height:2px;background:#1f2124;"></div><div class="a" style="left:34px;top:893px;width:2px;height:6px;background:#1f2124;"></div><svg class="a" style="left:47px;top:889px;" width="18" height="13" viewBox="0 0 18 13"><path d="M4 0.5 H14 L17 5 H1Z" fill="#a8a8a8"/><rect x="0.5" y="6" width="17" height="6.5" rx="1.5" fill="#a8a8a8"/><rect x="11.5" y="8.3" width="1.8" height="1.8" fill="#222"/><rect x="14" y="8.3" width="1.8" height="1.8" fill="#222"/></svg><div id="t59" class="t" style="left:70.7px;top:890.84px;font-size:12.00px;color:#bcbcbc;font-weight:normal;-webkit-text-stroke:0.22px #bcbcbc;">G:</div></div>
<div class="a" style="left:990px;top:871px;width:178px;height:20px;background:#3a3a3a;border-radius:2px;"></div>
<div class="a" style="left:999px;top:874px;width:144px;height:14px;background:#232323;border-radius:5px;"></div>
<div class="a" style="left:1048px;top:876px;width:23px;height:10px;background:#aaaaaa;border-radius:5px;"></div>
<svg class="a" style="left:1145px;top:873px;" width="18" height="16" viewBox="0 0 18 16"><rect x="1" y="1.5" width="4" height="3.2" fill="#999"/><rect x="6" y="1.5" width="11" height="3.2" fill="#999"/><rect x="1" y="6.2" width="4" height="3.2" fill="#999"/><rect x="6" y="6.2" width="11" height="3.2" fill="#999"/><rect x="1" y="10.9" width="4" height="3.2" fill="#999"/><rect x="6" y="10.9" width="11" height="3.2" fill="#999"/></svg>
</body></html>
